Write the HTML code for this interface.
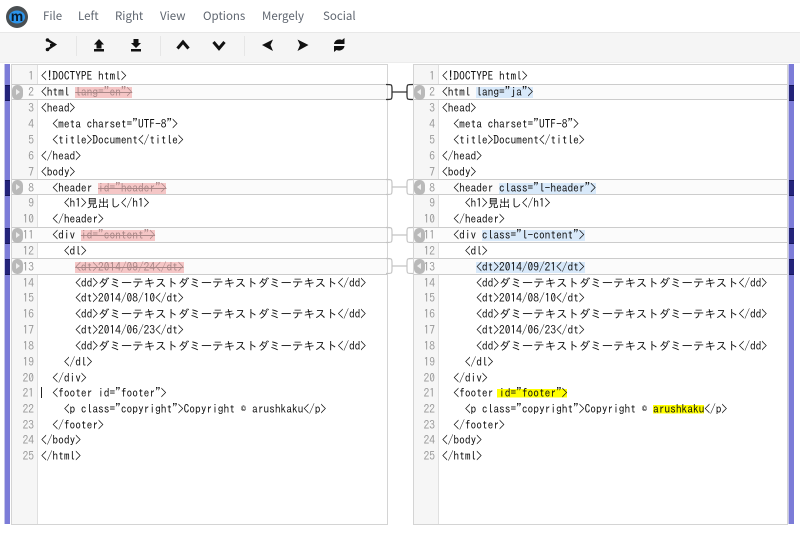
<!DOCTYPE html>
<html><head><meta charset="utf-8">
<style>
html,body{margin:0;padding:0;background:#fff;width:800px;height:534px;overflow:hidden}
body{position:relative;font-family:"IPAGothic",monospace}
.a{position:absolute}
.m{position:absolute;top:8px;font:11.5px/17px "Noto Sans CJK JP","DejaVu Sans",sans-serif;color:#5f6670}
#tb{position:absolute;left:0;top:32px;width:800px;height:31px;background:#f5f5f5;border-top:1px solid #e8e8e8;border-bottom:1px solid #ececec;box-sizing:border-box}
.sep{position:absolute;top:36px;width:1px;height:20px;background:#e6e6e6}
.panel{position:absolute;top:64px;height:461px;background:#fff;border:1px solid #d4d4d4;box-sizing:border-box}
.gut{position:absolute;top:65px;height:459px;width:25px;background:#f6f6f6;border-right:1px solid #e0e0e0;box-sizing:content-box}
.row{position:absolute;height:14px;background:#fbfbfb;border-top:1px solid #ccc;border-bottom:1px solid #ccc}
.l{position:absolute;white-space:pre;font:11.42px/16px "IPAGothic","Liberation Mono",monospace;color:#111;height:16px}
.n{position:absolute;width:24px;text-align:right;white-space:pre;font:11.42px/16px "IPAGothic","Liberation Mono",monospace;color:#999;height:16px}
.d{background:#f5c6c6;color:#a88;text-decoration:line-through}
.i{background:#d8e9fa}
.y{background:linear-gradient(transparent 1px,#ff0 1px,#ff0 9.5px,transparent 9.5px)}
.y0{padding-left:2px;margin-left:-2px}
.btn{position:absolute;width:11px;height:15px;border-radius:5px;background:#b9b9b9}
.btn i{position:absolute;top:4px;width:0;height:0;border-top:3.5px solid transparent;border-bottom:3.5px solid transparent}
.r i{left:4px;border-left:4px solid #eee}
.le i{left:3px;border-right:4px solid #eee}
.mk{position:absolute;width:5px;height:14px;background:#23237a;border-top:1px solid #16165a;border-bottom:1px solid #16165a}
</style></head><body>

<svg class="a" style="left:5px;top:2px" width="24" height="26" viewBox="0 0 24 26">
<circle cx="12" cy="15" r="11" fill="#4a4f52"/>
<ellipse cx="12" cy="15" rx="8" ry="6.500" fill="#2c94ea"/>
<text x="12" y="19" text-anchor="middle" font-family="Liberation Sans,sans-serif" font-weight="700" font-size="14" fill="#0a1a2a">m</text>
</svg>
<div class="m" style="left:43px">File</div>
<div class="m" style="left:78px">Left</div>
<div class="m" style="left:115px">Right</div>
<div class="m" style="left:160px">View</div>
<div class="m" style="left:203px">Options</div>
<div class="m" style="left:262px">Mergely</div>
<div class="m" style="left:323px">Social</div>

<div id="tb"></div>
<div class="sep" style="left:76px"></div>
<div class="sep" style="left:160px"></div>
<div class="sep" style="left:244px"></div>
<svg class="a" style="left:0;top:32px" width="400" height="30" viewBox="0 0 400 30" fill="none" stroke="#111">
<path d="M47.500 8 L55 12.500 L47.500 17.500 M50 13 H55" stroke-width="2.200"/><circle cx="47.500" cy="8" r="1.800" fill="#111" stroke="none"/><circle cx="47.500" cy="17.500" r="1.800" fill="#111" stroke="none"/>
<path d="M99 7 L104 12.500 H101.500 V16.500 H96.500 V12.500 H94 Z" fill="#111" stroke="none"/><path d="M94 17 H104 V19.500 H94 Z" fill="#111" stroke="none"/>
<path d="M133.500 7 H138.500 V11 H141 L136 16 L131 11 H133.500 Z" fill="#111" stroke="none"/><path d="M131 17 H141 V19.500 H131 Z" fill="#111" stroke="none"/>
<path d="M177.500 16.500 L183 10 L188.500 16.500" stroke-width="3"/>
<path d="M213.500 10 L219 16.500 L224.500 10" stroke-width="3"/>
<path d="M273 7.500 L262 13 L273 19 L270.500 13 Z" fill="#111" stroke="none"/>
<path d="M297.500 7.500 L308.500 13 L297.500 19 L300 13 Z" fill="#111" stroke="none"/>
<path d="M334 12 C334.500 8 339 6.500 342 8 L344.500 6 V12 H334 Z" fill="#111" stroke="none"/>
<path d="M344.500 14 C344 18 339.500 19.500 336.500 18 L334 20 V14 H344.500 Z" fill="#111" stroke="none"/>
</svg>

<!-- overview bars -->
<div class="a" style="left:5px;top:64px;width:5px;height:460px;background:#7c7cd8"></div>
<div class="a" style="left:4px;top:64px;width:1px;height:460px;background:#c4c4e8"></div>
<div class="a" style="left:789px;top:64px;width:5px;height:460px;background:#7c7cd8"></div>
<div class="a" style="left:788px;top:64px;width:1px;height:460px;background:#c4c4e8"></div>
<div class="mk" style="left:5px;top:85px"></div>
<div class="mk" style="left:5px;top:180px"></div>
<div class="mk" style="left:5px;top:228px"></div>
<div class="mk" style="left:5px;top:259px"></div>
<div class="mk" style="left:789px;top:85px"></div>
<div class="mk" style="left:789px;top:180px"></div>
<div class="mk" style="left:789px;top:228px"></div>
<div class="mk" style="left:789px;top:259px"></div>

<div class="panel" style="left:11px;width:377px"></div>
<div class="panel" style="left:413px;width:375px"></div>
<div class="gut" style="left:12px"></div>
<div class="gut" style="left:414px;width:24px"></div>

<!-- changed rows -->
<div class="row" style="left:12px;width:375px;top:84px"></div>
<div class="row" style="left:12px;width:375px;top:179px"></div>
<div class="row" style="left:12px;width:375px;top:227px"></div>
<div class="row" style="left:12px;width:375px;top:258px;height:15px"></div>
<div class="row" style="left:414px;width:373px;top:84px"></div>
<div class="row" style="left:414px;width:373px;top:179px"></div>
<div class="row" style="left:414px;width:373px;top:227px"></div>
<div class="row" style="left:414px;width:373px;top:258px;height:15px"></div>

<!-- connectors -->
<svg class="a" style="left:386px;top:80px" width="30" height="200" viewBox="0 0 30 200" fill="none" stroke="#c4c4c4" stroke-width="1.200">
<path d="M0 4.500 C6 4.500 6 4.500 6 9 V15 C6 19.500 6 19.500 0 19.500 M6 12 H21 M27 4.500 C21 4.500 21 4.500 21 9 V15 C21 19.500 21 19.500 27 19.500" stroke="#333" stroke-width="1.300"/>
<path d="M0 99.500 C6 99.500 6 99.500 6 104 V110 C6 114.500 6 114.500 0 114.500 M6 107 H21 M27 99.500 C21 99.500 21 99.500 21 104 V110 C21 114.500 21 114.500 27 114.500"/>
<path d="M0 147.500 C6 147.500 6 147.500 6 152 V158 C6 162.500 6 162.500 0 162.500 M6 155 H21 M27 147.500 C21 147.500 21 147.500 21 152 V158 C21 162.500 21 162.500 27 162.500"/>
<path d="M0 178.500 C6 178.500 6 178.500 6 183 V189 C6 193.500 6 193.500 0 193.500 M6 186 H21 M27 178.500 C21 178.500 21 178.500 21 183 V189 C21 193.500 21 193.500 27 193.500"/>
</svg>

<div class="btn r" style="left:12px;top:85px"><i></i></div>
<div class="btn r" style="left:12px;top:180px"><i></i></div>
<div class="btn r" style="left:12px;top:228px"><i></i></div>
<div class="btn r" style="left:12px;top:259px"><i></i></div>
<div class="btn le" style="left:414px;top:85px"><i></i></div>
<div class="btn le" style="left:414px;top:180px"><i></i></div>
<div class="btn le" style="left:414px;top:228px"><i></i></div>
<div class="btn le" style="left:414px;top:259px"><i></i></div>

<!-- left numbers -->
<div class="n" style="left:10px;top:69px">1</div><div class="n" style="left:10px;top:85px">2</div><div class="n" style="left:10px;top:101px">3</div><div class="n" style="left:10px;top:117px">4</div><div class="n" style="left:10px;top:133px">5</div><div class="n" style="left:10px;top:149px">6</div><div class="n" style="left:10px;top:165px">7</div><div class="n" style="left:10px;top:181px">8</div><div class="n" style="left:10px;top:196px">9</div><div class="n" style="left:10px;top:212px">10</div><div class="n" style="left:10px;top:228px">11</div><div class="n" style="left:10px;top:244px">12</div><div class="n" style="left:10px;top:260px">13</div><div class="n" style="left:10px;top:276px">14</div><div class="n" style="left:10px;top:291px">15</div><div class="n" style="left:10px;top:307px">16</div><div class="n" style="left:10px;top:323px">17</div><div class="n" style="left:10px;top:339px">18</div><div class="n" style="left:10px;top:355px">19</div><div class="n" style="left:10px;top:371px">20</div><div class="n" style="left:10px;top:386px">21</div><div class="n" style="left:10px;top:402px">22</div><div class="n" style="left:10px;top:418px">23</div><div class="n" style="left:10px;top:433px">24</div><div class="n" style="left:10px;top:449px">25</div>

<!-- right numbers -->
<div class="n" style="left:411px;top:69px">1</div><div class="n" style="left:411px;top:85px">2</div><div class="n" style="left:411px;top:101px">3</div><div class="n" style="left:411px;top:117px">4</div><div class="n" style="left:411px;top:133px">5</div><div class="n" style="left:411px;top:149px">6</div><div class="n" style="left:411px;top:165px">7</div><div class="n" style="left:411px;top:181px">8</div><div class="n" style="left:411px;top:196px">9</div><div class="n" style="left:411px;top:212px">10</div><div class="n" style="left:411px;top:228px">11</div><div class="n" style="left:411px;top:244px">12</div><div class="n" style="left:411px;top:260px">13</div><div class="n" style="left:411px;top:276px">14</div><div class="n" style="left:411px;top:291px">15</div><div class="n" style="left:411px;top:307px">16</div><div class="n" style="left:411px;top:323px">17</div><div class="n" style="left:411px;top:339px">18</div><div class="n" style="left:411px;top:355px">19</div><div class="n" style="left:411px;top:371px">20</div><div class="n" style="left:411px;top:386px">21</div><div class="n" style="left:411px;top:402px">22</div><div class="n" style="left:411px;top:418px">23</div><div class="n" style="left:411px;top:433px">24</div><div class="n" style="left:411px;top:449px">25</div>

<!-- left text -->
<div class="l" style="left:41px;top:69px">&lt;!DOCTYPE html&gt;</div>
<div class="l" style="left:41px;top:85px">&lt;html <span class="d">lang="en"&gt;</span></div>
<div class="l" style="left:41px;top:101px">&lt;head&gt;</div>
<div class="l" style="left:41px;top:117px">  &lt;meta charset="UTF-8"&gt;</div>
<div class="l" style="left:41px;top:133px">  &lt;title&gt;Document&lt;/title&gt;</div>
<div class="l" style="left:41px;top:149px">&lt;/head&gt;</div>
<div class="l" style="left:41px;top:165px">&lt;body&gt;</div>
<div class="l" style="left:41px;top:181px">  &lt;header <span class="d">id="header"&gt;</span></div>
<div class="l" style="left:41px;top:196px">    &lt;h1&gt;見出し&lt;/h1&gt;</div>
<div class="l" style="left:41px;top:212px">  &lt;/header&gt;</div>
<div class="l" style="left:41px;top:228px">  &lt;div <span class="d">id="content"&gt;</span></div>
<div class="l" style="left:41px;top:244px">    &lt;dl&gt;</div>
<div class="l" style="left:41px;top:260px">      <span class="d">&lt;dt&gt;2014/09/24&lt;/dt&gt;</span></div>
<div class="l" style="left:41px;top:276px">      &lt;dd&gt;ダミーテキストダミーテキストダミーテキスト&lt;/dd&gt;</div>
<div class="l" style="left:41px;top:291px">      &lt;dt&gt;2014/08/10&lt;/dt&gt;</div>
<div class="l" style="left:41px;top:307px">      &lt;dd&gt;ダミーテキストダミーテキストダミーテキスト&lt;/dd&gt;</div>
<div class="l" style="left:41px;top:323px">      &lt;dt&gt;2014/06/23&lt;/dt&gt;</div>
<div class="l" style="left:41px;top:339px">      &lt;dd&gt;ダミーテキストダミーテキストダミーテキスト&lt;/dd&gt;</div>
<div class="l" style="left:41px;top:355px">    &lt;/dl&gt;</div>
<div class="l" style="left:41px;top:371px">  &lt;/div&gt;</div>
<div class="l" style="left:41px;top:386px">  &lt;footer id="footer"&gt;</div>
<div class="l" style="left:41px;top:402px">    &lt;p class="copyright"&gt;Copyright © arushkaku&lt;/p&gt;</div>
<div class="l" style="left:41px;top:418px">  &lt;/footer&gt;</div>
<div class="l" style="left:41px;top:433px">&lt;/body&gt;</div>
<div class="l" style="left:41px;top:449px">&lt;/html&gt;</div>
<div class="a" style="left:41px;top:387px;width:1px;height:11px;background:#222"></div>

<!-- right text -->
<div class="l" style="left:442px;top:69px">&lt;!DOCTYPE html&gt;</div>
<div class="l" style="left:442px;top:85px">&lt;html <span class="i">lang="ja"&gt;</span></div>
<div class="l" style="left:442px;top:101px">&lt;head&gt;</div>
<div class="l" style="left:442px;top:117px">  &lt;meta charset="UTF-8"&gt;</div>
<div class="l" style="left:442px;top:133px">  &lt;title&gt;Document&lt;/title&gt;</div>
<div class="l" style="left:442px;top:149px">&lt;/head&gt;</div>
<div class="l" style="left:442px;top:165px">&lt;body&gt;</div>
<div class="l" style="left:442px;top:181px">  &lt;header <span class="i">class="l-header"&gt;</span></div>
<div class="l" style="left:442px;top:196px">    &lt;h1&gt;見出し&lt;/h1&gt;</div>
<div class="l" style="left:442px;top:212px">  &lt;/header&gt;</div>
<div class="l" style="left:442px;top:228px">  &lt;div <span class="i">class="l-content"&gt;</span></div>
<div class="l" style="left:442px;top:244px">    &lt;dl&gt;</div>
<div class="l" style="left:442px;top:260px">      <span class="i">&lt;dt&gt;2014/09/21&lt;/dt&gt;</span></div>
<div class="l" style="left:442px;top:276px">      &lt;dd&gt;ダミーテキストダミーテキストダミーテキスト&lt;/dd&gt;</div>
<div class="l" style="left:442px;top:291px">      &lt;dt&gt;2014/08/10&lt;/dt&gt;</div>
<div class="l" style="left:442px;top:307px">      &lt;dd&gt;ダミーテキストダミーテキストダミーテキスト&lt;/dd&gt;</div>
<div class="l" style="left:442px;top:323px">      &lt;dt&gt;2014/06/23&lt;/dt&gt;</div>
<div class="l" style="left:442px;top:339px">      &lt;dd&gt;ダミーテキストダミーテキストダミーテキスト&lt;/dd&gt;</div>
<div class="l" style="left:442px;top:355px">    &lt;/dl&gt;</div>
<div class="l" style="left:442px;top:371px">  &lt;/div&gt;</div>
<div class="l" style="left:442px;top:386px">  &lt;footer <span class="y y0">id="footer"&gt;</span></div>
<div class="l" style="left:442px;top:402px">    &lt;p class="copyright"&gt;Copyright © <span class="y">arushkaku</span>&lt;/p&gt;</div>
<div class="l" style="left:442px;top:418px">  &lt;/footer&gt;</div>
<div class="l" style="left:442px;top:433px">&lt;/body&gt;</div>
<div class="l" style="left:442px;top:449px">&lt;/html&gt;</div>

</body></html>
